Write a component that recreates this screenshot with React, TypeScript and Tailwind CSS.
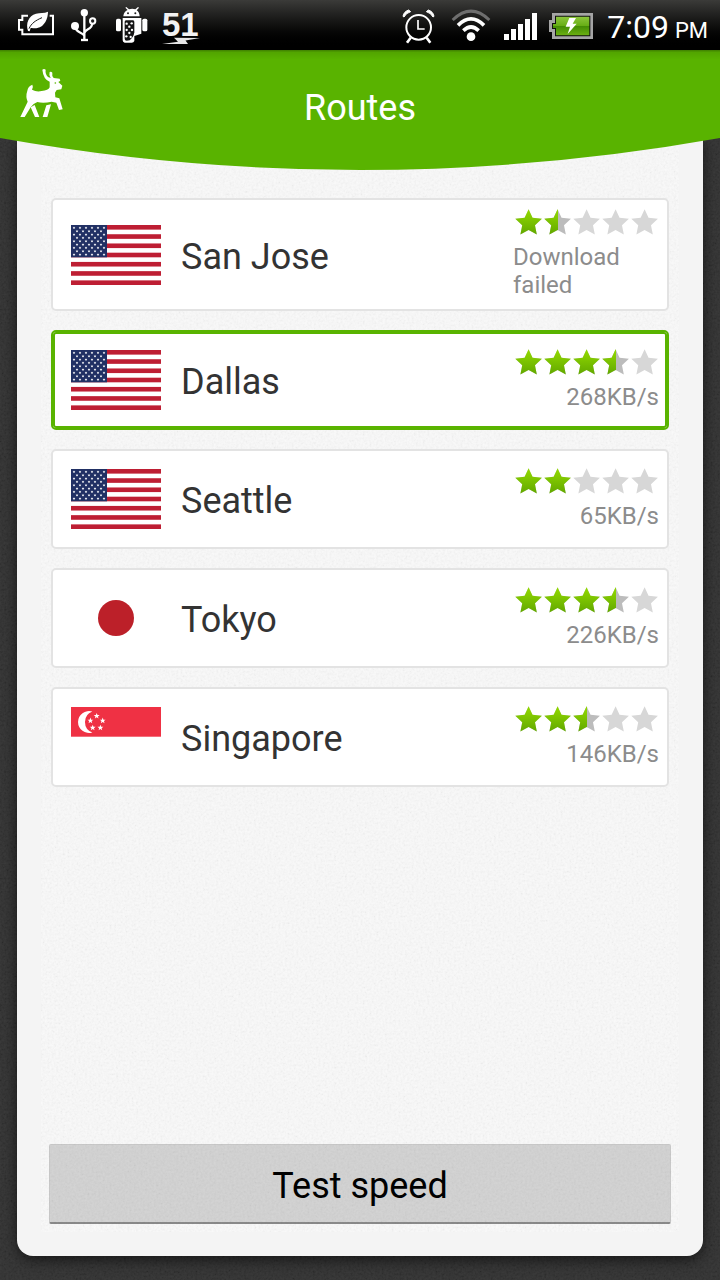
import React, { useState } from "react";
import clsx from "clsx";

type Country = "us" | "jp" | "sg";

interface Route {
    name: string;
    country: Country;
    rating: number;
    status: string;
}

const ROUTES: Route[] = [
    { name: "San Jose", country: "us", rating: 1.5, status: "Download failed" },
    { name: "Dallas", country: "us", rating: 3.5, status: "268KB/s" },
    { name: "Seattle", country: "us", rating: 2, status: "65KB/s" },
    { name: "Tokyo", country: "jp", rating: 3.5, status: "226KB/s" },
    { name: "Singapore", country: "sg", rating: 2.5, status: "146KB/s" },
];

// Five pointed star as an svg points list
function starPoints(cx: number, cy: number, r: number, inner = 0.382) {
    return Array.from({ length: 10 }, (_, i) => {
        const radius = i % 2 === 0 ? r : r * inner;
        const a = (Math.PI / 5) * i - Math.PI / 2;
        return `${(cx + radius * Math.cos(a)).toFixed(2)},${(cy + radius * Math.sin(a)).toFixed(2)}`;
    }).join(" ");
}

const STAR = starPoints(14.6, 15.2, 14, 0.48);

// Fine paper grain laid under the content
function Grain({ id, className }: { id: string; className: string }) {
    return (
        <svg aria-hidden="true" className={clsx("pointer-events-none absolute inset-0 h-full w-full", className)}>
            <filter id={id} x="0" y="0" width="100%" height="100%">
                <feTurbulence type="fractalNoise" baseFrequency="0.45" numOctaves="2" seed="4" />
                <feColorMatrix values="1.5 0 0 0 -0.25  1.5 0 0 0 -0.25  1.5 0 0 0 -0.25  0 0 0 0 1" />
            </filter>
            <rect width="100%" height="100%" filter={`url(#${id})`} />
        </svg>
    );
}

function StatusBar() {
    return (
        <div className="flex h-[50px] items-center justify-between bg-linear-to-b from-[#3b3b39] to-black pr-3 pl-[18px] text-white">
            <div className="flex items-center gap-[14px]">
                {/* Battery saver */}
                <svg width="38" height="38" viewBox="54 18 114 114" fill="none">
                    <path d="M84 47H67V60H57V89H67V103H159V47H149" stroke="white" strokeWidth="6" />
                    <path d="M84 93C77 70 85 48 108 41C120 38 132 40 144 35C144 55 134 80 112 84C104 86 97 83 92 84L89 94Z" fill="white" />
                    <path d="M87 86C94 70 107 61 126 53" stroke="#1c1c1c" strokeWidth="3" />
                </svg>
                {/* USB */}
                <svg width="30" height="38" viewBox="210 18 90 114" fill="none" stroke="white">
                    <path d="M253 38V119M253 107C247 96 226 99 226 79M253 99C258 83 277 93 278 64" strokeWidth="7" />
                    <path d="M243 120H264" strokeWidth="7" />
                    <circle cx="253" cy="38" r="11" fill="white" stroke="none" />
                    <circle cx="225" cy="78" r="12" fill="white" stroke="none" />
                    <circle cx="278" cy="63" r="8" strokeWidth="6" fill="#222" />
                </svg>
                {/* Android debugging */}
                <svg width="34" height="38" viewBox="342 18 102 114">
                    <path d="M370 49C371 37 378 32 383 30L376 23L379 21L387 28Q397 25 406 28L414 21L417 23L410 31Q418 36 419 49Z" fill="white" />
                    <circle cx="384" cy="40" r="3" fill="#222" />
                    <circle cx="406" cy="40" r="3" fill="#222" />
                    <rect x="348" y="56" width="15" height="38" rx="5" fill="white" />
                    <rect x="427" y="56" width="15" height="38" rx="5" fill="white" />
                    <path d="M368 54H424V101L403 108V123Q401 128 395 128H374Q368 127 368 121Z" fill="white" />
                    <path d="M378 61H399Q403 61 403 66V97Q401 111 389 121L380 122Q374 122 374 116V66Q374 61 378 61Z" fill="#151515" />
                    {[[380, 71], [395, 70], [388, 80], [380, 90], [396, 90], [388, 99], [379, 109], [392, 111]].map(([x, y]) => (
                        <circle key={`${x}-${y}`} cx={x} cy={y} r="3.5" fill="white" />
                    ))}
                </svg>
                <svg width="38" height="38" viewBox="0 0 38 38">
                    <text x="0" y="30" fontSize="33" fontWeight="700" fontFamily="'Liberation Sans', sans-serif" fill="#f2f2f2">51</text>
                    <path d="M12 31.8L38 32L23.5 34.5L26 38L0 38L16 35.8Z" fill="#e6e6e6" />
                </svg>
            </div>
            <div className="flex items-center gap-3">
                {/* Alarm */}
                <svg width="34" height="38" viewBox="36 18 102 114" fill="none" stroke="white">
                    <circle cx="86" cy="82" r="37" strokeWidth="6" />
                    <path d="M84 60V87H104" strokeWidth="5" />
                    <path d="M62 113L51 128M110 113L121 128" strokeWidth="8" />
                    <path d="M39 49Q41 35 56 30L62 35Q48 39 42 51ZM132 49Q130 35 115 30L109 35Q123 39 129 51Z" fill="white" strokeWidth="3" />
                </svg>
                {/* Wifi */}
                <svg width="43" height="38" viewBox="174 18 129 114" fill="none" stroke="white">
                    <path d="M188 60Q243 7 298 60" stroke="#6e6e6e" strokeWidth="9" />
                    <path d="M204 76Q243 37 282 76M220 92Q243 70 266 92" strokeWidth="11" />
                    <circle cx="243" cy="110" r="13" fill="white" stroke="none" />
                </svg>
                {/* Signal */}
                <svg width="34" height="38" viewBox="339 18 102 114" fill="white">
                    <path d="M342 102h15v18h-15zM363 87h15v33h-15zM384 72h15v48h-15zM405 57h15v63h-15zM426 39h15v81h-15z" />
                </svg>
                {/* Battery */}
                <svg width="44" height="38" viewBox="477 18 132 114">
                    <defs>
                        <linearGradient id="charge" x1="0" y1="0" x2="0" y2="1">
                            <stop offset="0" stopColor="#8cc63c" />
                            <stop offset="0.5" stopColor="#66ad14" />
                            <stop offset="0.51" stopColor="#438c04" />
                            <stop offset="1" stopColor="#6bb012" />
                        </linearGradient>
                    </defs>
                    <path d="M486 39H609V117H486V96H477V60H486Z" fill="#a5a5a5" />
                    <path d="M495 47H601V109H495V87H486V69H495Z" fill="#111" />
                    <path d="M498 50H598V106H498V84H489V72H498Z" fill="url(#charge)" />
                    <path d="M538 54H558L548 71H560L533 102L540 80H527Z" fill="white" />
                </svg>
                <div className="flex w-[103px] items-baseline justify-end gap-[6px] pt-[3px] whitespace-nowrap">
                    <span className="text-[32px] leading-10">7:09</span>
                    <span className="text-[22px] leading-6">PM</span>
                </div>
            </div>
        </div>
    );
}

function Header() {
    return (
        <header className="relative z-10 grid h-[120px] grid-cols-[44px_1fr_44px] px-5 pt-[18px] text-white">
            <svg aria-hidden="true" viewBox="0 0 720 120" preserveAspectRatio="none" className="absolute inset-0 h-full w-full">
                <defs>
                    <linearGradient id="lip" x1="0" y1="0" x2="0" y2="1">
                        <stop offset="0" stopColor="#3f8000" />
                        <stop offset="0.02" stopColor="#52a500" />
                        <stop offset="0.08" stopColor="#59b300" />
                    </linearGradient>
                </defs>
                <path d="M0 0H720V88Q360 152 0 88Z" fill="url(#lip)" />
            </svg>
            <button type="button" aria-label="Home" className="relative h-[50px] w-[44px]">
                <svg width="44" height="50" viewBox="60 54 132 150" fill="white">
                    <path d="M127 59Q132 55 137 59Q135 72 144 81L152 84Q146 73 149 66Q154 64 157 68Q155 78 161 84L179 86L181 92L175 96L187 107L184 118L170 120L165 128L166 142L178 145L188 178L177 180L169 158L155 155Q130 161 112 156Q100 160 92 172L74 201H61L83 155Q76 140 82 122Q84 108 97 104Q101 111 96 119Q110 127 125 123Q145 122 149 112L149 95Q130 88 127 59Z" />
                    <path d="M92 172L104 165L118 201H105ZM139 166L153 163L142 201H128Z" />
                    <circle cx="166" cy="99" r="2.5" fill="#59b300" />
                </svg>
            </button>
            <h1 className="relative pt-4 text-center text-4xl leading-[48px]">Routes</h1>
        </header>
    );
}

function Flag({ country }: { country: Country }) {
    if (country === "jp") {
        return (
            <svg width="90" height="60" viewBox="0 0 90 60" className="shrink-0" role="img" aria-label="Japan">
                <rect width="90" height="60" fill="white" />
                <circle cx="45" cy="30" r="18" fill="#bc2029" />
            </svg>
        );
    }

    if (country === "sg") {
        return (
            <svg width="90" height="60" viewBox="0 0 90 60" className="shrink-0" role="img" aria-label="Singapore">
                <rect width="90" height="60" fill="white" />
                <rect width="90" height="29.7" fill="#ef3144" />
                <path d="M21.3 4.5A11 11 0 1 0 21.3 25.5A11.2 11.2 0 0 1 21.3 4.5Z" fill="white" />
                {[[25.7, 9], [19.4, 13.7], [31.7, 13.7], [21.7, 20.8], [29.4, 20.8]].map(([x, y]) => (
                    <polygon key={`${x}-${y}`} points={starPoints(x, y, 3.1, 0.42)} fill="white" />
                ))}
            </svg>
        );
    }

    return (
        <svg width="90" height="60" viewBox="0 0 90 60" className="shrink-0" role="img" aria-label="United States">
            <rect width="90" height="60" fill="white" />
            {Array.from({ length: 7 }, (_, i) => (
                <rect key={i} y={(i * 120) / 13} width="90" height={60 / 13} fill="#be1e33" />
            ))}
            <rect width="36" height="32.3" fill="#213064" />
            {Array.from({ length: 9 }, (_, row) =>
                Array.from({ length: row % 2 ? 5 : 6 }, (_, col) => (
                    <polygon
                        key={`${row}-${col}`}
                        points={starPoints((row % 2 ? 6 : 3) + col * 6, 2.9 + row * 3.33, 1.4, 0.5)}
                        fill="white"
                    />
                ))
            )}
        </svg>
    );
}

function Rating({ value }: { value: number }) {
    return (
        <div className="flex justify-end" role="img" aria-label={`${value} of 5 stars`}>
            {[0, 1, 2, 3, 4].map((i) => {
                const fill = Math.min(Math.max(value - i, 0), 1);
                return (
                    <svg key={i} width="29" height="28" viewBox="0 0 29 28">
                        <polygon points={STAR} fill={fill === 0.5 ? "#bcbcbc" : "#d7d7d7"} />
                        {fill > 0 && (
                            <polygon
                                points={STAR}
                                fill="url(#starFill)"
                                clipPath={fill === 0.5 ? "url(#halfStar)" : undefined}
                            />
                        )}
                    </svg>
                );
            })}
        </div>
    );
}

function RouteCard({ route, selected, onSelect }: { route: Route; selected: boolean; onSelect: () => void }) {
    return (
        <li>
            <button
                type="button"
                aria-pressed={selected}
                onClick={onSelect}
                className={clsx(
                    "flex min-h-[100px] w-full items-center rounded-[5px] border-2 bg-white py-2 pr-2 pl-[18px] text-left",
                    selected ? "border-[#59b300] ring-2 ring-[#59b300] ring-inset" : "border-[#e3e3e3]"
                )}
            >
                <Flag country={route.country} />
                <span className="ml-5 flex-1 pt-1 text-4xl text-[#333]">{route.name}</span>
                <div className="flex w-[146px] flex-col gap-[7px] pb-[2px]">
                    <Rating value={route.rating} />
                    <span
                        className={clsx(
                            "text-2xl leading-7 text-[#8c8c8c]",
                            route.status.endsWith("/s") && "text-right"
                        )}
                    >
                        {route.status}
                    </span>
                </div>
            </button>
        </li>
    );
}

export default function App() {
    const [selected, setSelected] = useState("Dallas");

    return (
        <div className="flex min-h-screen flex-col bg-[#2e2e2e] font-[Roboto,sans-serif]">
            {/* Shared star paint */}
            <svg aria-hidden="true" className="absolute h-0 w-0">
                <defs>
                    <linearGradient id="starFill" x1="0" y1="0" x2="0" y2="1">
                        <stop offset="0" stopColor="#93db00" />
                        <stop offset="1" stopColor="#62a800" />
                    </linearGradient>
                    <clipPath id="halfStar">
                        <rect width="15" height="28" />
                    </clipPath>
                </defs>
            </svg>

            <StatusBar />
            <Header />

            <main className="relative -mt-8 flex flex-1 flex-col px-[17px] pb-6">
                <Grain id="darkGrain" className="opacity-[0.06]" />
                <div className="relative flex flex-1 flex-col rounded-b-2xl bg-[#f4f4f4] px-6 pb-6 shadow-[0_4px_14px_rgba(0,0,0,0.6)]">
                    <div className="relative flex flex-1 flex-col justify-between bg-[#f9f9f9] px-2 pt-[60px] pb-2">
                        <Grain id="paperGrain" className="opacity-[0.05]" />
                        <ul className="relative flex flex-col gap-[19px] px-[2px]">
                            {ROUTES.map((route) => (
                                <RouteCard
                                    key={route.name}
                                    route={route}
                                    selected={route.name === selected}
                                    onSelect={() => setSelected(route.name)}
                                />
                            ))}
                        </ul>
                        <button
                            type="button"
                            className="relative mt-8 h-20 rounded-[2px] border border-b-2 border-black/5 border-b-black/35 bg-black/15 pt-1 text-4xl text-black"
                        >
                            Test speed
                        </button>
                    </div>
                </div>
            </main>
        </div>
    );
}
